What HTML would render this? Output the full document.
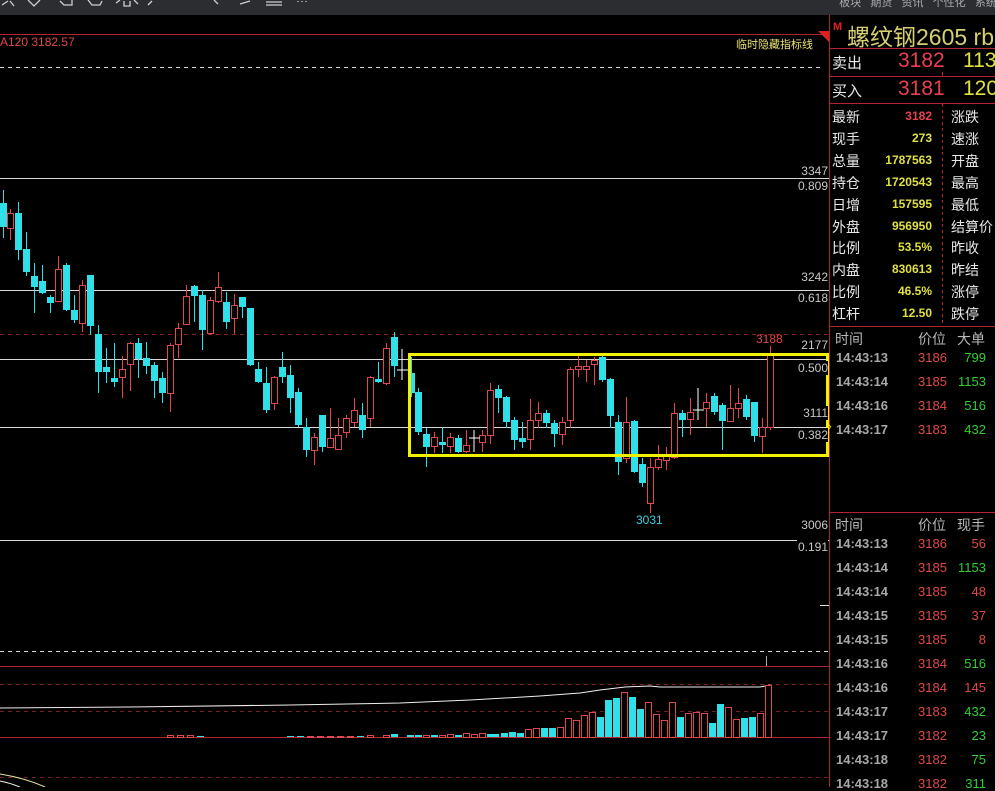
<!DOCTYPE html>
<html><head><meta charset="utf-8"><style>
*{margin:0;padding:0}
body{width:995px;height:787px;background:#000;overflow:hidden;position:relative;font-family:"Liberation Sans","Noto Sans CJK SC",sans-serif}
.t{position:absolute;white-space:nowrap}
</style></head><body>
<svg id="s" width="995" height="787" style="position:absolute;left:0;top:0" xmlns="http://www.w3.org/2000/svg">
<rect x="0" y="0" width="995" height="15" fill="#2b2d31"/>
<g stroke="#cfcfcf" stroke-width="1.3" fill="none">
<path d="M2 5 L8 1 M10 1 L14 6"/><path d="M28 0 L34 6 L40 0"/><path d="M60 1 L64 5 L72 5 L72 0"/><path d="M88 0 L92 5 L100 5 L102 1"/><path d="M116 3 L120 0 M124 1 L124 6 L130 6 L130 1 M134 0 L138 4"/><path d="M148 5 L152 1"/>
<path d="M214 0 L218 4"/><path d="M240 4 L250 1"/><path d="M266 2 H282 M266 5 H282"/><path d="M298 1 v1 M302 1 v1 M306 1 v1"/>
</g>
<line x1="0" y1="34.5" x2="829" y2="34.5" stroke="#b0262c"/>
<polygon points="818,31 829,31 829,42" fill="#e02020"/>
<line x1="829.5" y1="15" x2="829.5" y2="787" stroke="#b0262c"/>
<line x1="0" y1="67.5" x2="820" y2="67.5" stroke="#ddd" stroke-dasharray="4,4"/>
<g stroke="#d8d8d8" stroke-width="1">
<line x1="0" y1="178.5" x2="829" y2="178.5"/><line x1="0" y1="290.5" x2="829" y2="290.5"/><line x1="0" y1="359.5" x2="829" y2="359.5"/><line x1="0" y1="427.5" x2="829" y2="427.5"/><line x1="0" y1="540.5" x2="829" y2="540.5"/>
</g>
<line x1="0" y1="334.5" x2="829" y2="334.5" stroke="#8a2020" stroke-dasharray="4,4"/>
<line x1="820" y1="605.5" x2="829" y2="605.5" stroke="#ddd"/>
<line x1="0" y1="651.5" x2="829" y2="651.5" stroke="#ddd" stroke-dasharray="4,4"/>
<line x1="0" y1="666.5" x2="829" y2="666.5" stroke="#b0262c"/>
<line x1="766.5" y1="656" x2="766.5" y2="666" stroke="#aaa"/>
<line x1="0" y1="684.5" x2="829" y2="684.5" stroke="#7a2020" stroke-dasharray="4,4"/>
<line x1="0" y1="711.5" x2="829" y2="711.5" stroke="#7a2020" stroke-dasharray="4,4"/>
<line x1="0" y1="737.5" x2="829" y2="737.5" stroke="#b0262c"/>
<line x1="0" y1="777.5" x2="829" y2="777.5" stroke="#7a2020" stroke-dasharray="4,4"/>
<path d="M0 774 Q25 778 45 787" stroke="#e8e0a0" fill="none"/>
<path d="M0 781 Q10 783 20 787" stroke="#e8e8e8" fill="none"/>
<polyline points="0,708 130,707 290,705 400,703 470,700 540,696 580,693 600,690 625,687 650,686 660,687 690,687 760,687 770,685" fill="none" stroke="#eee"/>
<g id="c"></g>
<rect x="409.5" y="354.5" width="418" height="101" fill="none" stroke="#f0f000" stroke-width="3"/>
<g stroke="#fff"><line x1="402" y1="349" x2="402" y2="380"/><line x1="397" y1="370" x2="408" y2="370"/><line x1="474" y1="430" x2="474" y2="452"/><line x1="469" y1="438" x2="480" y2="438"/><line x1="698" y1="388" x2="698" y2="420"/><line x1="693" y1="410" x2="704" y2="410"/></g>
<g stroke="#b0262c"><line x1="830" y1="48.5" x2="995" y2="48.5"/><line x1="830" y1="76.5" x2="995" y2="76.5"/><line x1="830" y1="103.5" x2="995" y2="103.5"/><line x1="830" y1="326.5" x2="995" y2="326.5"/><line x1="830" y1="512.5" x2="995" y2="512.5"/></g>
<line x1="942.5" y1="104" x2="942.5" y2="326" stroke="#b0262c" stroke-dasharray="3,3"/>
<line x1="942.5" y1="72" x2="942.5" y2="76" stroke="#b0262c"/>
</svg>
<div class="t" style="left:0;top:35px;color:#e04848;font-size:12px">A120 3182.57</div>
<div class="t" style="left:736px;top:36px;color:#e8e070;font-size:11px">临时隐藏指标线</div>
<div id="ax"></div>
<div class="t" style="left:756px;top:332px;color:#e04848;font-size:12px">3188</div>
<div class="t" style="left:636px;top:513px;color:#40d0e0;font-size:12px">3031</div>
<div class="t" style="left:828px;top:421px;color:#f0f000;font-size:11px">›</div>
<div class="t" style="left:830px;top:0;width:165px;height:15px;background:#2b2d31;color:#aaa;font-size:11px;line-height:6px;overflow:hidden">&nbsp;&nbsp;&nbsp;板块&nbsp;&nbsp;&nbsp;期货&nbsp;&nbsp;&nbsp;资讯&nbsp;&nbsp;&nbsp;个性化&nbsp;&nbsp;&nbsp;系统</div>
<div class="t" style="left:833px;top:21px;color:#e02020;font-size:11px;font-weight:bold">M</div>
<div class="t" style="left:847px;top:18px;color:#d8d070;font-size:23px">螺纹钢2605 rb</div>
<div class="t" style="left:832px;top:52px;color:#e8e8e8;font-size:15px">卖出</div>
<div class="t" style="left:898px;top:49px;color:#e84050;font-size:21px">3182</div>
<div class="t" style="left:963px;top:49px;color:#e0e040;font-size:21px">113</div>
<div class="t" style="left:832px;top:80px;color:#e8e8e8;font-size:15px">买入</div>
<div class="t" style="left:898px;top:77px;color:#e84050;font-size:21px">3181</div>
<div class="t" style="left:963px;top:77px;color:#e0e040;font-size:21px">120</div>
<div id="info"></div>
<div id="tr"></div>
<script>
var C=[[3,203,227,190,238,0],[10,213,228,209,240,1],[18,213,250,202,260,0],[26,249,272,232,276,0],[34,276,287,263,313,0],[42,281,293,265,294,0],[50,297,303,295,313,0],[58,269,301,256,301,1],[66,265,310,263,311,0],[74,310,320,295,323,0],[82,285,323,280,332,1],[90,275,326,275,335,0],[98,334,372,325,393,0],[106,367,372,348,383,0],[114,378,382,343,387,0],[122,369,377,356,398,1],[130,343,364,342,391,1],[138,343,359,338,378,0],[146,358,366,342,374,0],[154,365,381,362,398,0],[162,378,393,372,403,0],[170,345,393,343,412,1],[178,328,344,323,358,1],[186,296,324,285,324,1],[194,286,296,285,322,0],[202,295,330,290,350,0],[210,300,333,297,335,1],[218,287,301,272,303,1],[226,302,322,292,329,0],[234,305,318,294,334,1],[242,297,307,297,318,0],[250,308,365,308,366,0],[258,369,382,362,383,0],[266,383,410,367,413,0],[274,377,403,376,410,1],[282,367,377,352,383,0],[290,375,398,365,413,0],[298,392,425,388,427,0],[306,427,450,418,457,0],[314,437,450,433,465,1],[322,415,447,415,452,0],[330,438,447,408,448,1],[338,435,449,418,450,1],[346,418,432,415,438,1],[354,410,422,398,427,1],[362,415,430,403,438,0],[370,377,418,376,427,1],[378,379,382,362,383,0],[386,348,383,343,385,1],[394,337,366,332,377,0],[411,373,393,357,397,0],[418,392,432,388,435,0],[426,434,447,428,467,0],[434,437,446,432,453,1],[442,442,445,427,453,0],[450,437,446,433,453,1],[458,438,452,435,453,0],[466,445,451,430,453,1],[482,435,442,430,452,1],[490,390,435,383,444,1],[498,389,398,385,413,0],[506,397,422,396,428,0],[514,420,440,417,450,0],[522,438,442,422,448,0],[530,420,439,399,450,1],[538,413,420,402,428,1],[546,413,423,410,428,0],[554,423,434,420,447,0],[562,422,434,417,445,1],[570,369,420,367,428,1],[578,366,369,355,377,1],[586,366,369,360,382,1],[594,360,364,357,385,1],[602,357,380,355,382,0],[610,379,416,378,428,0],[618,422,462,415,475,0],[626,422,458,397,463,1],[634,421,472,420,473,0],[642,464,483,458,487,0],[650,467,503,458,513,1],[658,459,467,445,470,1],[666,455,460,447,470,1],[674,413,457,403,459,1],[682,413,420,410,437,0],[690,412,419,398,435,1],[706,402,408,393,427,1],[714,396,412,393,415,0],[722,405,421,403,450,0],[730,408,421,385,422,1],[738,403,408,388,418,1],[746,399,417,395,420,0],[754,402,436,402,442,0],[762,427,436,418,453,1],[770,353,427,346,430,1]];
var V=[[495,734,0],[504,733,0],[512,732,0],[520,733,0],[528,729,1],[536,728,1],[544,728,0],[552,728,0],[560,727,1],[568,718,1],[576,720,1],[584,715,1],[592,712,1],[600,717,0],[608,700,0],[616,698,0],[624,692,1],[632,697,0],[640,709,0],[648,702,1],[656,714,1],[664,720,1],[672,702,1],[680,717,0],[688,713,1],[696,712,1],[704,713,1],[712,723,0],[720,704,0],[728,707,1],[736,719,1],[744,718,0],[752,717,0],[760,713,1],[768,685,1],[170,735,1],[180,735,1],[190,735,1],[200,736,0],[290,736,0],[300,736,0],[310,736,1],[320,736,1],[330,736,1],[340,736,1],[350,736,1],[360,736,0],[370,735,1],[386,735,1],[394,734,0],[410,735,0],[418,735,0],[426,735,1],[434,735,0],[442,735,1],[450,734,1],[458,735,0],[466,733,1],[474,734,1],[482,733,1],[490,734,0]];
var h='';
C.forEach(function(c){var x=c[0],col=c[5]?'#e0484c':'#30e0e8';var t=Math.min(c[1],c[2]),b=Math.max(c[1],c[2]);
h+='<line x1="'+(x+.5)+'" y1="'+c[3]+'" x2="'+(x+.5)+'" y2="'+c[4]+'" stroke="'+col+'"/>';
if(c[5])h+='<rect x="'+(x-2.5)+'" y="'+(t+.5)+'" width="6" height="'+Math.max(b-t,1)+'" fill="#000" stroke="'+col+'"/>';
else h+='<rect x="'+(x-3)+'" y="'+t+'" width="7" height="'+Math.max(b-t,2)+'" fill="'+col+'"/>';});
V.forEach(function(v){var col=v[2]?'#e0484c':'#30e0e8';
if(v[2])h+='<rect x="'+(v[0]-2.5)+'" y="'+(v[1]+.5)+'" width="6" height="'+(737-v[1])+'" fill="#000" stroke="'+col+'"/>';
else h+='<rect x="'+(v[0]-3)+'" y="'+v[1]+'" width="7" height="'+(737-v[1])+'" fill="'+col+'"/>';});
document.getElementById('c').innerHTML=h;
var ax=[[171,'3347'],[179,'0.809'],[277,'3242'],[291,'0.618'],[345,'2177'],[361,'0.500'],[413,'3111'],[428,'0.382'],[525,'3006'],[540,'0.191']];
var a='';ax.forEach(function(p,i){a+='<div class="t" style="right:167px;top:'+(i%2?p[0]:p[0]-7)+'px;color:#c8c8c8;font-size:12px;background:#000;padding-left:1px">'+p[1]+'</div>';});
document.getElementById('ax').innerHTML=a;
var L=['最新','现手','总量','持仓','日增','外盘','比例','内盘','比例','杠杆'],Vv=['3182','273','1787563','1720543','157595','956950','53.5%','830613','46.5%','12.50'],R=['涨跌','速涨','开盘','最高','最低','结算价','昨收','昨结','涨停','跌停'];
var s='';L.forEach(function(l,i){var y=107+i*21.9;
s+='<div class="t" style="left:832px;top:'+y+'px;color:#e8e8e8;font-size:14px">'+l+'</div>';
s+='<div class="t" style="right:63px;top:'+(y+2)+'px;color:'+(i?'#e0e040':'#e84050')+';font-size:12px;font-weight:bold">'+Vv[i]+'</div>';
s+='<div class="t" style="left:951px;top:'+y+'px;color:#e8e8e8;font-size:14px">'+R[i]+'</div>';});
document.getElementById('info').innerHTML=s;
function tab(y0,hd,rows){var s='<div class="t" style="left:835px;top:'+y0+'px;color:#b8b8b8;font-size:14px">时间</div><div class="t" style="left:918px;top:'+y0+'px;color:#b8b8b8;font-size:14px">价位</div><div class="t" style="left:957px;top:'+y0+'px;color:#b8b8b8;font-size:14px">'+hd+'</div>';
rows.forEach(function(r,i){var y=y0+21+i*24;
s+='<div class="t" style="left:836px;top:'+y+'px;color:#a8a8a8;font-size:13px;font-weight:bold">'+r[0]+'</div>';
s+='<div class="t" style="left:918px;top:'+y+'px;color:#e04848;font-size:13px">'+r[1]+'</div>';
s+='<div class="t" style="right:9px;top:'+y+'px;color:'+(r[3]?'#30d030':'#e04848')+';font-size:13px">'+r[2]+'</div>';});return s;}
document.getElementById('tr').innerHTML=tab(329,'大单',[['14:43:13','3186','799',1],['14:43:14','3185','1153',1],['14:43:16','3184','516',1],['14:43:17','3183','432',1]])+tab(515,'现手',[['14:43:13','3186','56',0],['14:43:14','3185','1153',1],['14:43:14','3185','48',0],['14:43:15','3185','37',0],['14:43:15','3185','8',0],['14:43:16','3184','516',1],['14:43:16','3184','145',0],['14:43:17','3183','432',1],['14:43:17','3182','23',1],['14:43:18','3182','75',1],['14:43:18','3182','311',1]]);
</script>
</body></html>
